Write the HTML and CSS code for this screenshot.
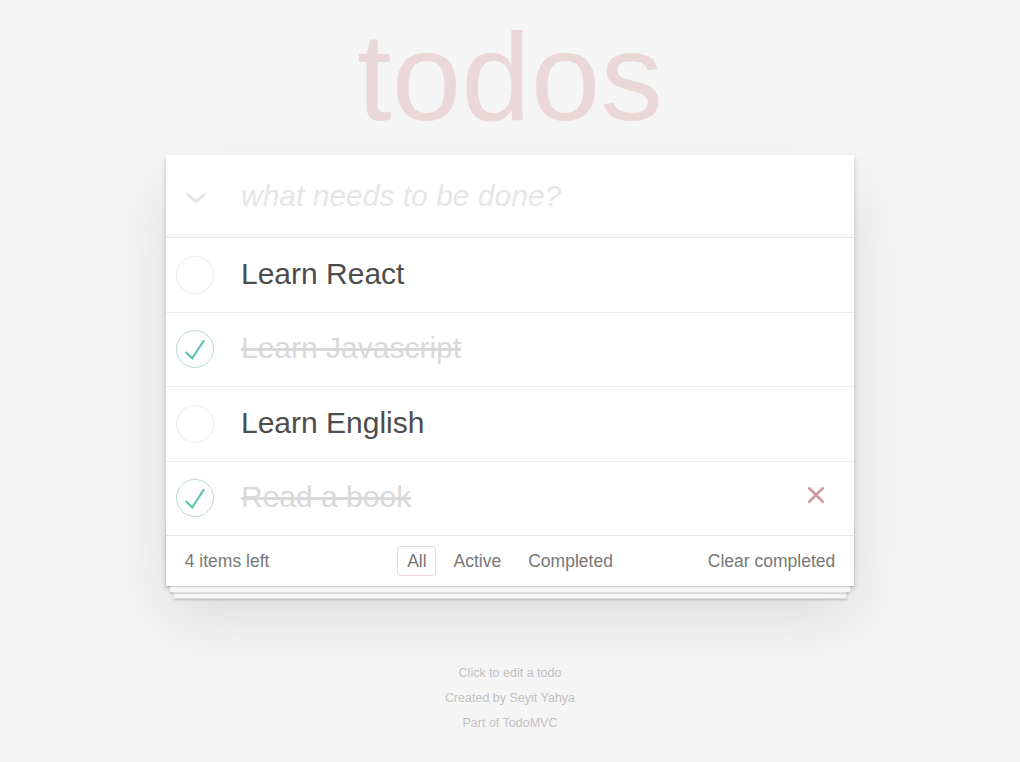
FILE: index.html
```html
<!DOCTYPE html>
<html lang="en">
<head>
<meta charset="utf-8">
<title>todos</title>
<link rel="stylesheet" href="styles.css">
</head>
<body>
<div class="page">
  <h1 class="title">todos</h1>
  <section class="todoapp">
    <header class="new-row">
      <span class="toggle-all">
        <svg width="22" height="12" viewBox="0 0 22 12"><polyline points="2,2 11,9.5 20,2" fill="none" stroke="#e6e6e6" stroke-width="3"/></svg>
      </span>
      <input class="new-todo" placeholder="what needs to be done?">
    </header>
    <ul class="todo-list">
      <li class="todo">
        <span class="toggle"><svg width="40" height="40" viewBox="-4 -4 108 108"><circle cx="50" cy="50" r="50" fill="none" stroke="#ededed" stroke-width="2.7"/></svg></span>
        <label class="todo-label">Learn React</label>
      </li>
      <li class="todo completed">
        <span class="toggle"><svg width="40" height="40" viewBox="-4 -4 108 108"><circle cx="50" cy="50" r="50" fill="none" stroke="#bddad5" stroke-width="2.7"/><path fill="#5dc2af" d="M72 25L42 71 27 56l-4 4 20 20 34-52z"/></svg></span>
        <label class="todo-label">Learn Javascript</label>
      </li>
      <li class="todo">
        <span class="toggle"><svg width="40" height="40" viewBox="-4 -4 108 108"><circle cx="50" cy="50" r="50" fill="none" stroke="#ededed" stroke-width="2.7"/></svg></span>
        <label class="todo-label">Learn English</label>
      </li>
      <li class="todo completed">
        <span class="toggle"><svg width="40" height="40" viewBox="-4 -4 108 108"><circle cx="50" cy="50" r="50" fill="none" stroke="#bddad5" stroke-width="2.7"/><path fill="#5dc2af" d="M72 25L42 71 27 56l-4 4 20 20 34-52z"/></svg></span>
        <label class="todo-label">Read a book</label>
        <span class="destroy"><svg width="18" height="18" viewBox="0 0 18 18"><path d="M1.5 1.5L16.5 16.5M16.5 1.5L1.5 16.5" stroke="#cc9a9a" stroke-width="2.6" fill="none"/></svg></span>
      </li>
    </ul>
    <footer class="footer">
      <span class="todo-count">4 items left</span>
      <ul class="filters">
        <li><a class="filter selected">All</a></li>
        <li><a class="filter">Active</a></li>
        <li><a class="filter">Completed</a></li>
      </ul>
      <span class="clear-completed">Clear completed</span>
    </footer>
  </section>
  <footer class="info">
    <p>Click to edit a todo</p>
    <p>Created by Seyit Yahya</p>
    <p>Part of TodoMVC</p>
  </footer>
</div>
</body>
</html>
```

FILE: styles.css
```css
html, body {
  margin: 0;
  padding: 0;
}

body {
  background: #f5f5f5;
  font-family: "Liberation Sans", Arial, Helvetica, sans-serif;
  font-size: 17.5px;
  line-height: 1.4em;
  color: #4d4d4d;
}

.page {
  width: 688px;
  margin: 0 auto;
}

.title {
  margin: 14px 0 16px;
  font-size: 125px;
  line-height: 125px;
  font-weight: 400;
  text-align: center;
  color: rgba(175, 47, 47, 0.15);
}

.todoapp {
  background: #fff;
  position: relative;
  box-shadow: 0 2.5px 5px 0 rgba(0, 0, 0, 0.2), 0 31px 62px 0 rgba(0, 0, 0, 0.1);
}

.new-row {
  display: flex;
  align-items: center;
  height: 82px;
  box-shadow: inset 0 -2.5px 1px rgba(0, 0, 0, 0.03);
}

.toggle-all {
  width: 75px;
  flex: none;
  display: flex;
  padding-left: 19px;
  box-sizing: border-box;
  padding-top: 4px;
}

.new-todo {
  flex: 1;
  border: 0;
  outline: none;
  background: transparent;
  font-family: inherit;
  font-size: 30px;
  line-height: 42px;
  padding: 20px 20px 20px 0;
  color: inherit;
}

.new-todo::placeholder {
  font-style: italic;
  color: #e6e6e6;
}

.todo-list {
  list-style: none;
  margin: 0;
  padding: 0;
  border-top: 1px solid #e6e6e6;
}

.todo {
  display: flex;
  align-items: center;
  border-bottom: 1px solid #ededed;
  position: relative;
}

.todo:last-child {
  border-bottom: none;
}

.toggle {
  width: 75px;
  flex: none;
  display: flex;
  padding-left: 9px;
  box-sizing: border-box;
}

.toggle svg {
  display: block;
}

.todo-label {
  flex: 1;
  font-size: 30px;
  line-height: 36px;
  padding: 17.5px 18.75px 20px 0;
  color: #4d4d4d;
}

.completed .todo-label {
  color: #d9d9d9;
  text-decoration: line-through;
}

.destroy {
  position: absolute;
  right: 29px;
  top: 24px;
  display: flex;
}

.footer {
  position: relative;
  display: grid;
  grid-template-columns: 1fr auto 1fr;
  align-items: center;
  height: 25px;
  padding: 12.5px 18.75px;
  border-top: 1px solid #e6e6e6;
  color: #777;
  line-height: 25px;
}

.footer::before {
  content: '';
  position: absolute;
  right: 0;
  bottom: 0;
  left: 0;
  height: 62px;
  overflow: hidden;
  box-shadow: 0 1.25px 1.25px rgba(0, 0, 0, 0.2),
              0 10px 0 -3.75px #f6f6f6,
              0 11.25px 1.25px -3.75px rgba(0, 0, 0, 0.2),
              0 20px 0 -7.5px #f6f6f6,
              0 21.25px 2.5px -7.5px rgba(0, 0, 0, 0.2);
  pointer-events: none;
}

.todo-count {
  position: relative;
}

.filters {
  list-style: none;
  margin: 0;
  padding: 0;
  display: flex;
  align-items: center;
  height: 25px;
  position: relative;
}

.filter {
  display: block;
  margin: 0 3.75px;
  padding: 3.75px 8.75px;
  line-height: 20px;
  border: 1px solid transparent;
  border-radius: 3.75px;
  color: inherit;
}

.filter.selected {
  border-color: rgba(175, 47, 47, 0.2);
}

.clear-completed {
  justify-self: end;
  position: relative;
}

.info {
  margin: 81px auto 0;
  color: #bfbfbf;
  font-size: 12.5px;
  line-height: 1;
  text-align: center;
  text-shadow: 0 1px 0 rgba(255, 255, 255, 0.5);
}

.info p {
  margin: 12.5px 0;
}
```
